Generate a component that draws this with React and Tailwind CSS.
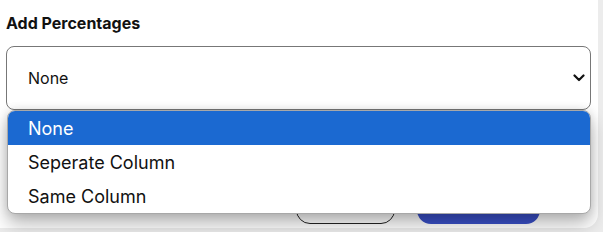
export default function App() {
  const options = ['None', 'Seperate Column', 'Same Column']

  return (
    <div className="w-[603px] h-[232px] overflow-hidden bg-[#ececec] font-['Inter','Liberation_Sans',sans-serif] text-[#111]">
      <div className="relative flex flex-col w-[598px] h-[228px] bg-white rounded-br-[14px] pl-[6px] pr-[7px] pt-[13px]">
        <label className="block text-[16px] leading-[20px] font-bold">Add Percentages</label>

        <div className="relative mt-[13px] z-10">
          <div className="flex items-center justify-between h-[64px] border border-[#777] rounded-[8px] bg-white pl-[21px] pr-[5px]">
            <span className="text-[16px]">None</span>
            <svg width="12" height="8" viewBox="0 0 12 8" fill="none" stroke="#111" strokeWidth="2.2" strokeLinecap="round" strokeLinejoin="round">
              <path d="M1.5 1.5 L6 6 L10.5 1.5" />
            </svg>
          </div>

          <ul className="absolute left-[1px] right-0 top-[64px] bg-white border border-[#a8a8a8] rounded-[8px] overflow-hidden shadow-[0_10px_18px_rgba(0,0,0,0.28),0_0_10px_rgba(0,0,0,0.12)]">
            {options.map((opt, i) => (
              <li
                key={opt}
                className={
                  i === 0
                    ? 'h-[34px] flex items-center pl-[20px] text-[18px] bg-[#1b69d1] text-white'
                    : 'h-[34px] flex items-center pl-[20px] text-[18px] text-[#111]'
                }
              >
                {opt}
              </li>
            ))}
          </ul>
        </div>

        <div className="mt-auto flex justify-end gap-[22px] pr-[51px] pb-[4px]">
          <button className="w-[99px] h-[40px] border border-[#222] rounded-[14px] bg-white text-[15px]">Cancel</button>
          <button className="w-[123px] h-[40px] rounded-[14px] bg-[#3a50c8] text-white text-[15px] font-medium">Save</button>
        </div>
      </div>
    </div>
  )
}
